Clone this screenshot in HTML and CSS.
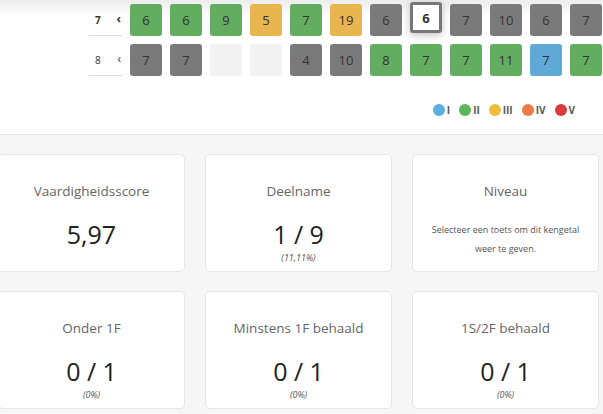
FILE: index.html
```html
<!DOCTYPE html>
<html lang="nl">
<head>
    <meta charset="UTF-8">
    <meta name="viewport" content="width=device-width, initial-scale=1.0">
    <title>Resultaten</title>
    <link rel="stylesheet" href="styles.css">
</head>
<body>
    <div class="matrix">
        <div class="row">
            <div class="label bold"><span>7</span><span class="arrow">‹</span></div>
            <div class="cell green">6</div>
            <div class="cell green">6</div>
            <div class="cell green">9</div>
            <div class="cell yellow">5</div>
            <div class="cell green">7</div>
            <div class="cell yellow">19</div>
            <div class="cell gray">6</div>
            <div class="cell selected">6</div>
            <div class="cell gray">7</div>
            <div class="cell gray">10</div>
            <div class="cell gray">6</div>
            <div class="cell gray">7</div>
        </div>
        <div class="row">
            <div class="label"><span>8</span><span class="arrow">‹</span></div>
            <div class="cell gray">7</div>
            <div class="cell gray">7</div>
            <div class="cell empty"></div>
            <div class="cell empty"></div>
            <div class="cell gray">4</div>
            <div class="cell gray">10</div>
            <div class="cell green">8</div>
            <div class="cell green">7</div>
            <div class="cell green">7</div>
            <div class="cell green">11</div>
            <div class="cell blue">7</div>
            <div class="cell green">7</div>
        </div>

        <div class="legend">
            <span class="dot blue"></span><span class="lvl">I</span>
            <span class="dot green"></span><span class="lvl">II</span>
            <span class="dot yellow"></span><span class="lvl">III</span>
            <span class="dot orange"></span><span class="lvl">IV</span>
            <span class="dot red"></span><span class="lvl">V</span>
        </div>
    </div>

    <div class="stats">
        <div class="card">
            <div class="title">Vaardigheidsscore</div>
            <div class="value">5,97</div>
        </div>
        <div class="card">
            <div class="title">Deelname</div>
            <div class="value">1 / 9</div>
            <div class="sub">(11,11%)</div>
        </div>
        <div class="card">
            <div class="title">Niveau</div>
            <div class="note">Selecteer een toets om dit kengetal<br>weer te geven.</div>
        </div>
        <div class="card">
            <div class="title">Onder 1F</div>
            <div class="value">0 / 1</div>
            <div class="sub">(0%)</div>
        </div>
        <div class="card">
            <div class="title">Minstens 1F behaald</div>
            <div class="value">0 / 1</div>
            <div class="sub">(0%)</div>
        </div>
        <div class="card">
            <div class="title">1S/2F behaald</div>
            <div class="value">0 / 1</div>
            <div class="sub">(0%)</div>
        </div>
    </div>
</body>
</html>
```

FILE: styles.css
```css
body {
    margin: 0;
    width: 603px;
    height: 414px;
    overflow: hidden;
    font-family: "Open Sans", "Noto Sans", sans-serif;
    color: #333;
    background: #fff;
}

/* bovenste deel met de toetsresultaten per leerjaar */
.matrix {
    height: 134px;
    padding-top: 4px;
    box-sizing: border-box;
    background: linear-gradient(#ececec, #fff 16px);
}

.row {
    display: flex;
    gap: 8px;
    padding-left: 89px;
    margin-bottom: 8px;
}

.label {
    display: flex;
    justify-content: space-between;
    align-items: center;
    width: 33px; height: 32px;
    padding: 0 1px 0 6px;
    box-sizing: border-box;
    border-bottom: 1px solid #ddd;
    font-size: 10px;
    color: #333;
}
.label.bold { font-weight: 700; }
.label .arrow { font-size: 12px; margin-top: -2px; }

.cell {
    display: flex;
    justify-content: center;
    align-items: center;
    width: 32px; height: 32px;
    box-sizing: border-box;
    border-radius: 3px;
    font-size: 13px;
    color: #333;
}
.cell.green { background: #62ad5f; }
.cell.yellow { background: #e8b54e; }
.cell.gray { background: #7a7a7a; }
.cell.blue { background: #5fa9d6; }
.cell.empty { background: #f3f3f3; }
.cell.selected {
    background: #fff;
    border: 3px solid #777;
    font-weight: 700;
    margin-top: -2px;
    height: 31px;
    box-shadow: 0 2px 8px rgba(0, 0, 0, 0.25);
}

/* legenda niveaus */
.legend {
    display: flex;
    justify-content: flex-end;
    align-items: center;
    padding-right: 28px;
    margin-top: 27px;
    font-size: 10px;
    font-weight: 700;
    color: #555;
}
.dot {
    width: 12px; height: 12px;
    border-radius: 50%;
    margin-right: 2px;
}
.lvl { margin-right: 9px; }
.lvl:last-child { margin-right: 0; }
.dot.blue { background: #5aaee0; }
.dot.green { background: #5cb65a; }
.dot.yellow { background: #f1bb3c; }
.dot.orange { background: #ec7b47; }
.dot.red { background: #d93a3a; }

/* kengetallen */
.stats {
    display: grid;
    grid-template-columns: repeat(3, 187px);
    grid-auto-rows: 118px;
    column-gap: 20px;
    row-gap: 19px;
    margin-left: -2px;
    padding-top: 19px;
    height: 280px;
    box-sizing: border-box;
    background: #f6f6f6;
    border-top: 1px solid #e9e9e9;
}

.card {
    display: flex;
    flex-direction: column;
    align-items: center;
    background: #fff;
    border: 1px solid #e6e6e6;
    border-radius: 5px;
    padding-top: 26px;
    box-sizing: border-box;
}

.title {
    font-size: 13.5px;
    line-height: 20px;
    color: #666;
}

.value {
    margin-top: 19px;
    font-size: 25px;
    line-height: 28px;
    color: #222;
}

.sub {
    margin-top: 4px;
    font-size: 9px;
    line-height: 12px;
    font-style: italic;
    color: #555;
}

.note {
    margin-top: 19px;
    font-size: 9px;
    line-height: 19px;
    text-align: center;
    color: #555;
}
```
